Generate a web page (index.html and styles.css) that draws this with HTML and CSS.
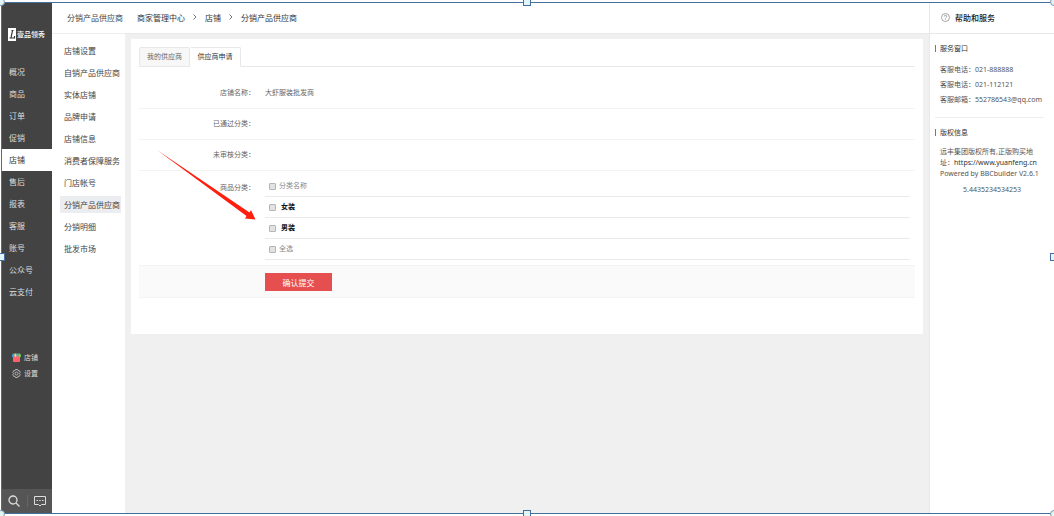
FILE: index.html
```html
<!DOCTYPE html>
<html lang="zh-CN">
<head>
  <meta charset="UTF-8">
  <meta name="viewport" content="width=device-width, initial-scale=1.0">
  <title>分销产品供应商</title>
  <link rel="stylesheet" href="styles.css">
</head>
<body>
<div class="frame">
  <nav class="sidebar">
    <div class="logo">
      <svg width="8" height="13" viewBox="0 0 8 13"><rect width="8" height="13" fill="#fff"/><path d="M3.5 2.5h2M4.5 2.5L3 10M1.5 10h5V8" fill="none" stroke="#333" stroke-width="1.2"/></svg>
      <span>壹品领秀</span>
    </div>
    <a href="#">概况</a>
    <a href="#">商品</a>
    <a href="#">订单</a>
    <a href="#">促销</a>
    <a href="#" class="active">店铺</a>
    <a href="#">售后</a>
    <a href="#">报表</a>
    <a href="#">客服</a>
    <a href="#">账号</a>
    <a href="#">公众号</a>
    <a href="#">云支付</a>
    <div class="shortcuts">
      <a href="#">
        <svg width="9" height="9" viewBox="0 0 9 9"><rect x="1" y="2" width="7" height="7" rx="1" fill="#ff626c"/><path d="M1 .5h1.500V3a1.200 1.200 0 0 1-2.500 0V2z" fill="#36a5f5"/><path d="M2.500 .5h2V3a1 1 0 0 1-2 0z" fill="#ffd83b"/><path d="M4.500 .5h2V3a1 1 0 0 1-2 0z" fill="#42b3f0"/><path d="M6.500 .5H8L9 2v1a1.200 1.200 0 0 1-2.500 0z" fill="#6fce4e"/></svg>
        店铺
      </a>
      <a href="#">
        <svg width="9" height="9" viewBox="0 0 18 18" fill="none" stroke="#ccc" stroke-width="1.600"><path d="M7 1h4l1 2.500 2.500-.3 2 3.500L15 9l1.500 2.300-2 3.500-2.500-.3L11 17H7l-1-2.500-2.500.3-2-3.500L3 9 1.500 6.700l2-3.500 2.500.3z"/><circle cx="9" cy="9" r="3"/></svg>
        设置
      </a>
    </div>
    <div class="tools">
      <button type="button" aria-label="搜索">
        <svg width="12" height="12" viewBox="0 0 12 12" fill="none" stroke="#ddd" stroke-width="1.300"><circle cx="5" cy="5" r="4"/><path d="M8 8l3.500 3.500"/></svg>
      </button>
      <button type="button" aria-label="消息">
        <svg width="12" height="12" viewBox="0 0 12 12" fill="none" stroke="#ddd"><path d="M.5 1.500h11v8h-4L6 11 4.500 9.500h-4z"/><path d="M2.500 5.500h1.500M5.200 5.500h1.500M8 5.500h1.500"/></svg>
      </button>
    </div>
  </nav>

  <nav class="submenu">
    <h2>分销产品供应商</h2>
    <ul>
      <li><a href="#">店铺设置</a></li>
      <li><a href="#">自销产品供应商</a></li>
      <li><a href="#">实体店铺</a></li>
      <li><a href="#">品牌申请</a></li>
      <li><a href="#">店铺信息</a></li>
      <li><a href="#">消费者保障服务</a></li>
      <li><a href="#">门店帐号</a></li>
      <li><a href="#" class="active">分销产品供应商</a></li>
      <li><a href="#">分销明细</a></li>
      <li><a href="#">批发市场</a></li>
    </ul>
  </nav>

  <main class="main">
    <div class="breadcrumb">
      <a href="#">商家管理中心</a>
      <svg width="4" height="6" viewBox="0 0 4 6"><path d="M.5 .5L3 3 .5 5.500"/></svg>
      <a href="#">店铺</a>
      <svg width="4" height="6" viewBox="0 0 4 6"><path d="M.5 .5L3 3 .5 5.500"/></svg>
      <a href="#">分销产品供应商</a>
    </div>
    <div class="panel">
      <div class="tabs">
        <a href="#">我的供应商</a>
        <a href="#" class="active">供应商申请</a>
      </div>
      <form>
        <div class="form-row first">
          <div class="form-label">店铺名称：</div>
          <div>大虾服装批发商</div>
        </div>
        <div class="form-row">
          <div class="form-label">已通过分类：</div>
        </div>
        <div class="form-row">
          <div class="form-label">未审核分类：</div>
        </div>
        <div class="form-row category">
          <div class="form-label">商品分类：</div>
          <div class="checks">
            <label class="check"><input type="checkbox">分类名称</label>
            <label class="check strong"><input type="checkbox">女装</label>
            <label class="check strong"><input type="checkbox">男装</label>
            <label class="check"><input type="checkbox">全选</label>
          </div>
        </div>
        <div class="form-foot">
          <button type="submit" class="submit">确认提交</button>
        </div>
      </form>
    </div>
  </main>

  <aside class="help">
    <h2>
      <svg width="9" height="9" viewBox="0 0 18 18" fill="none" stroke="#888" stroke-width="1.500"><circle cx="9" cy="9" r="8"/><path d="M6.500 7a2.500 2.500 0 1 1 3.500 2.300c-.7.400-1 .8-1 1.700M9 12.500V14"/></svg>
      帮助和服务
    </h2>
    <section class="contact">
      <h3>服务窗口</h3>
      <p>客服电话：021-888888</p>
      <p>客服电话：021-112121</p>
      <p>客服邮箱：552786543@qq.com</p>
    </section>
    <section class="copyright">
      <h3>版权信息</h3>
      <p>远丰集团版权所有,正版购买地<br>址：<a href="#">https://www.yuanfeng.cn</a><br>Powered by BBCbuilder V2.6.1</p>
      <p class="version">5.4435234534253</p>
    </section>
  </aside>

  <svg class="arrow" width="100" height="72" viewBox="0 0 100 72"><path d="M0 0L92.500 62.500 94 60 98.500 69.500 88 68.500 89.500 66z" fill="#ff1f0f"/></svg>
  <i class="handle round top left"></i>
  <i class="handle top center"></i>
  <i class="handle round top right"></i>
  <i class="handle middle left"></i>
  <i class="handle middle right"></i>
  <i class="handle round bottom left"></i>
  <i class="handle bottom center"></i>
  <i class="handle round bottom right"></i>
</div>
</body>
</html>
```
FILE: styles.css
```css
* {
  box-sizing: border-box;
}
body {
  margin: 0;
  background: #fff;
  overflow: hidden;
  color: #555;
  font-family: "Noto Sans", "Noto Sans CJK SC", sans-serif;
  font-size: 8px;
}
a {
  color: inherit;
  text-decoration: none;
}
h2, h3, p, ul {
  margin: 0;
  padding: 0;
  font-weight: normal;
}
button {
  border: 0;
  padding: 0;
  background: none;
  font-family: inherit;
}
.frame {
  position: relative;
  display: flex;
  min-height: calc(100vh - 4px);
  margin: 2px 0 2px 1px;
  border: 1px solid #44709e;
  border-right: 0;
}

/* left navigation */
.sidebar {
  display: flex;
  flex-direction: column;
  width: 50px;
  background: #434343;
  color: #ddd;
}
.logo {
  display: flex;
  align-items: center;
  gap: 1px;
  height: 58px;
  padding: 4px 0 0 6px;
  color: #fff;
  font-size: 7px;
  font-weight: 500;
  white-space: nowrap;
}
.sidebar > a {
  height: 22px;
  padding-left: 7px;
  line-height: 22px;
}
.sidebar > a.active {
  background: #fff;
  color: #333;
}
.shortcuts {
  margin-top: 46px;
  padding-left: 10px;
  font-size: 7px;
}
.shortcuts a {
  display: flex;
  align-items: center;
  gap: 3px;
  height: 16px;
}
.tools {
  display: flex;
  align-items: center;
  height: 24px;
  margin-top: auto;
  background: #555;
}
.tools button {
  display: flex;
  flex: 1;
  justify-content: center;
}
.tools button + button {
  border-left: 1px solid #666;
}

/* second level menu */
.submenu {
  width: 73px;
  background: #fff;
  color: #444;
}
.submenu h2 {
  height: 31px;
  padding-left: 15px;
  border-bottom: 1px solid #eee;
  font-size: 8px;
  line-height: 29px;
  white-space: nowrap;
}
.submenu ul {
  padding: 5px 4px 0 8px;
  list-style: none;
}
.submenu li {
  display: flex;
  align-items: center;
  height: 22px;
}
.submenu li a {
  flex: 1;
  padding-left: 4px;
  line-height: 17px;
  white-space: nowrap;
}
.submenu .active {
  background: #ecedf1;
}

/* content */
.main {
  flex: 1;
  background: #f0f0f0;
}
.breadcrumb {
  display: flex;
  align-items: center;
  gap: 8px;
  height: 31px;
  padding: 0 0 2px 12px;
  border-bottom: 1px solid #e8e8e8;
  background: #fff;
  color: #333;
}
.breadcrumb svg {
  fill: none;
  stroke: #777;
}
.panel {
  margin: 5px 6px 0;
  padding: 8px 8px 36px;
  background: #fff;
  color: #666;
  font-size: 7px;
}
.tabs {
  display: flex;
  border-bottom: 1px solid #e8e8e8;
}
.tabs a {
  width: 51px;
  height: 20px;
  margin-bottom: -1px;
  border: 1px solid #e8e8e8;
  border-radius: 2px 2px 0 0;
  background: #f7f7f7;
  line-height: 18px;
  text-align: center;
}
.tabs a + a {
  border-left: 0;
}
.tabs .active {
  border-bottom-color: #fff;
  background: #fff;
  color: #333;
}
.form-row {
  display: grid;
  grid-template-columns: 116px 1fr;
  column-gap: 10px;
  border-bottom: 1px solid #f3f3f3;
  line-height: 30px;
}
.form-row.first {
  padding-top: 11px;
}
.form-label {
  text-align: right;
}
.category {
  padding-bottom: 5px;
}
.category .form-label {
  line-height: 33px;
}
.checks {
  padding: 5px 5px 0 0;
}
.check {
  display: flex;
  align-items: center;
  height: 21px;
  padding-left: 4px;
  border-bottom: 1px solid #eaeaea;
  color: #888;
  line-height: 20px;
}
.check.strong {
  color: #111;
  font-weight: bold;
}
.check input {
  appearance: none;
  width: 7px;
  height: 7px;
  margin: 0 3px 0 0;
  border: 1px solid #b5b5b5;
  border-radius: 1px;
  background: #e2e2e2;
}
.check.strong input {
  margin-right: 5px;
}
.form-foot {
  padding: 7px 0 6px 126px;
  border-bottom: 1px solid #f3f3f3;
  background: #fafafa;
}
.submit {
  display: block;
  width: 67px;
  height: 18px;
  background: #e54f50;
  color: #fff;
  font-size: 8px;
}

/* help column */
.help {
  width: 125px;
  border-left: 1px solid #e8e8e8;
  background: #fff;
  font-size: 7px;
}
.help h2 {
  display: flex;
  align-items: center;
  gap: 5px;
  height: 31px;
  padding: 0 0 2px 11px;
  border-bottom: 1px solid #e8e8e8;
  color: #222;
  font-size: 8px;
  font-weight: 500;
}
.help section {
  margin: 0 10px 0 5px;
}
.help h3 {
  padding-left: 4px;
  border-left: 1px solid #3b7cff;
  color: #333;
  font-size: 7px;
  line-height: 7px;
}
.help p {
  padding-left: 5px;
  white-space: nowrap;
}
.contact {
  padding: 11px 0 10px;
}
.contact h3 {
  margin-bottom: 10px;
}
.contact p {
  line-height: 15px;
}
.copyright {
  padding-top: 11px;
  border-top: 1px solid #eee;
}
.copyright h3 {
  margin-bottom: 10px;
}
.copyright p {
  line-height: 11px;
}
.copyright a {
  color: #333;
}
.copyright .version {
  margin-top: 5px;
  text-align: center;
}

/* annotation arrow and selection handles */
.arrow {
  position: absolute;
  left: 155px;
  top: 147px;
}
.handle {
  position: absolute;
  width: 8px;
  height: 8px;
  border: 1px solid #44709e;
  background: #e2f6fa;
}
.handle.round {
  border-color: #7d98ab;
  border-radius: 50%;
}
.handle.top {
  top: -5px;
}
.handle.middle {
  top: calc(50% - 5px);
}
.handle.bottom {
  bottom: -5px;
}
.handle.left {
  left: -5px;
}
.handle.center {
  left: calc(50% - 5px);
}
.handle.right {
  right: -4px;
}
```
